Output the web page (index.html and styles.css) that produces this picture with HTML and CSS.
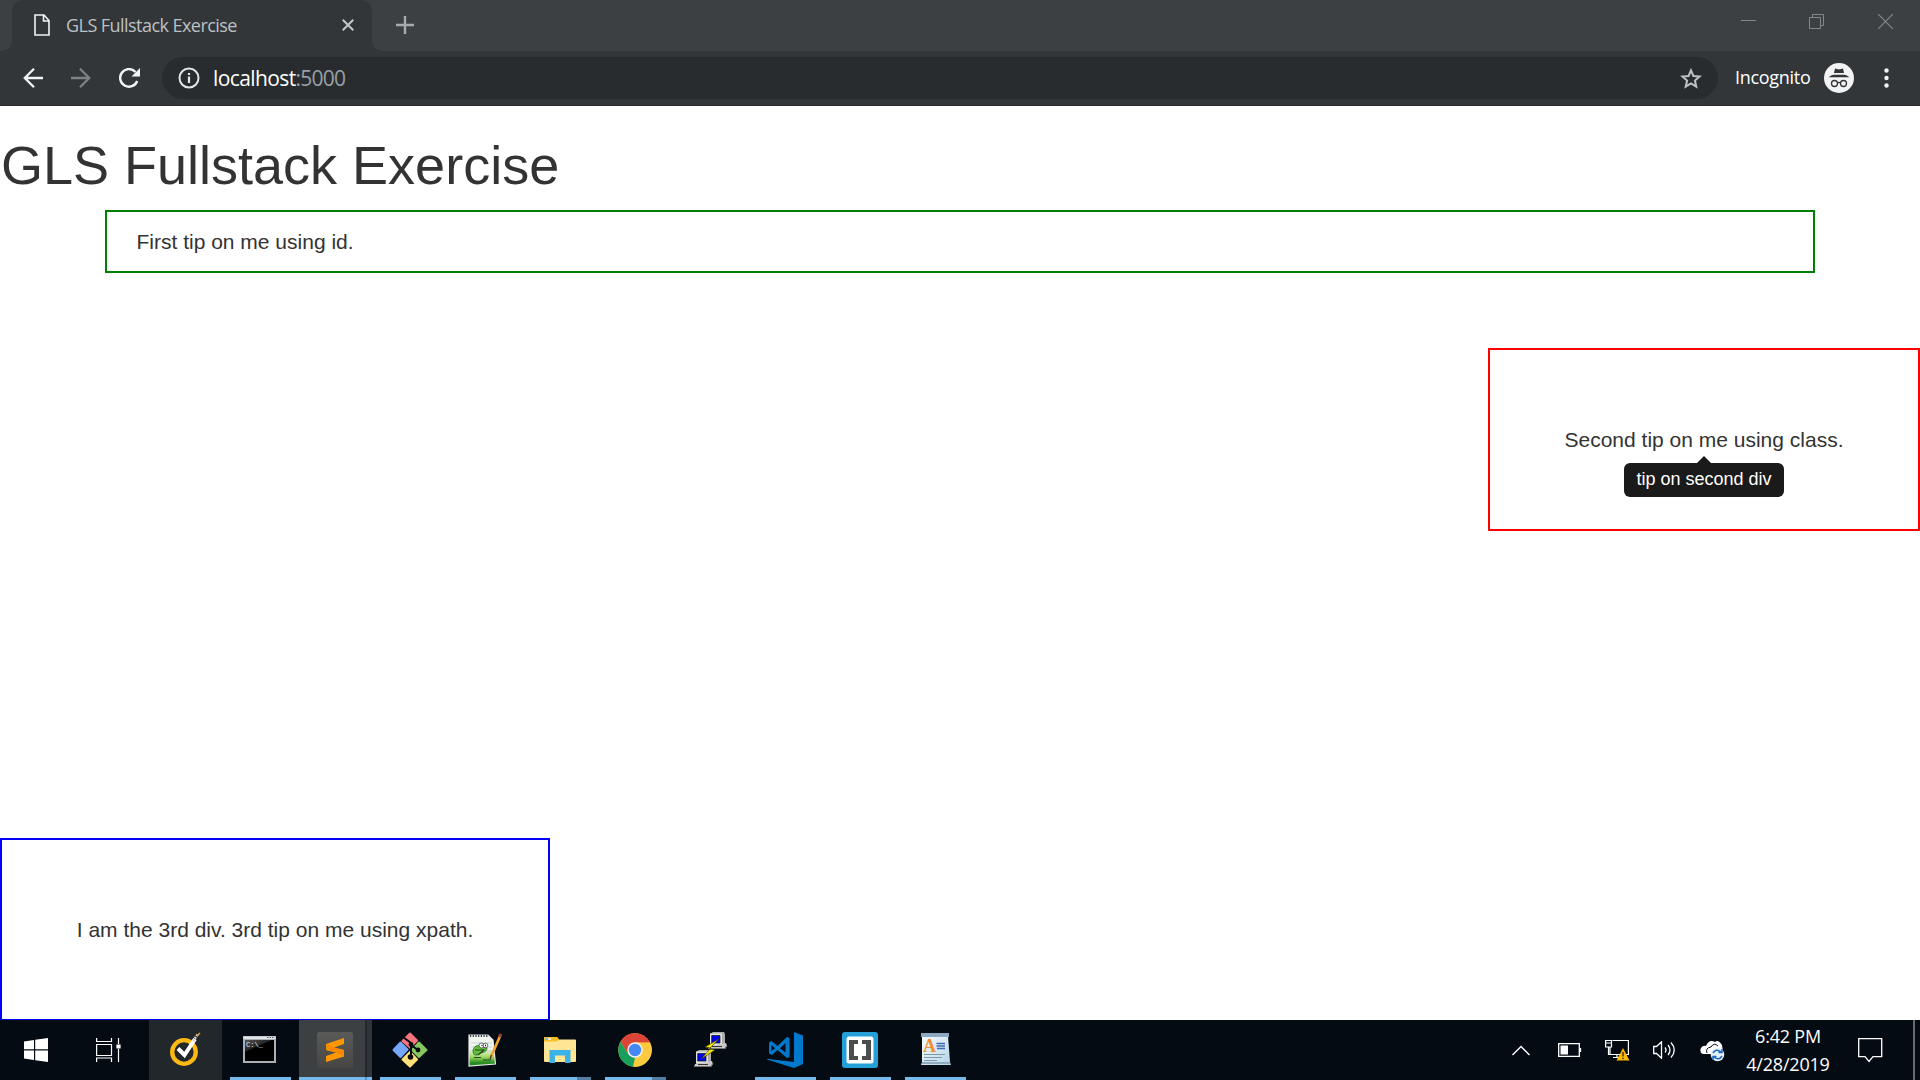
FILE: index.html
```html
<!DOCTYPE html>
<html lang="en">
<head>
<meta charset="utf-8">
<title>GLS Fullstack Exercise</title>
<link rel="stylesheet" href="styles.css">
</head>
<body>
<div class="screen">
  <header class="tabstrip">
    <svg class="tab-edge" width="12" height="51"><path d="M0 51Q12 51 12 39V51Z" fill="#323639"/></svg>
    <div class="tab">
      <svg width="16" height="22" viewBox="0 0 16 22" fill="none" stroke="#f1f3f4" stroke-width="1.6"><path d="M1 1H10L15 6.5V21H1ZM9.500 1V7H15"/></svg>
      <span class="tab-title">GLS Fullstack Exercise</span>
      <svg class="tab-close" width="12" height="12" viewBox="0 0 12 12" stroke="#c3c6c8" stroke-width="2"><path d="M.7.7 11.300 11.300M11.300.7.7 11.300"/></svg>
    </div>
    <svg class="tab-edge" width="12" height="51"><path d="M12 51Q0 51 0 39V51Z" fill="#323639"/></svg>
    <svg class="new-tab" width="18" height="18" viewBox="0 0 18 18" stroke="#a7abae" stroke-width="2.400"><path d="M9 0V18M0 9H18"/></svg>
    <div class="window-buttons">
      <svg width="15" height="15" stroke="#85888b"><path d="M0 6.500H15"/></svg>
      <svg width="15" height="15" fill="none" stroke="#85888b"><path d="M.5 3.500H11.500V14.500H.5ZM3.500 3.500V.5H14.500V11.500H11.500"/></svg>
      <svg width="15" height="15" stroke="#85888b" stroke-width="1.200"><path d="M0 0 15 15M15 0 0 15"/></svg>
    </div>
  </header>
  <nav class="toolbar">
    <svg class="nav-icon" width="20" height="20" viewBox="0 0 20 20" fill="none" stroke="#f1f3f4" stroke-width="2.300"><path d="M20 10H2M11 .8 1.800 10 11 19.200"/></svg>
    <svg class="nav-icon" width="20" height="20" viewBox="0 0 20 20" fill="none" stroke="#7f8285" stroke-width="2.300"><path d="M0 10H18M9 .8 18.200 10 9 19.200"/></svg>
    <svg class="reload" width="22" height="20" viewBox="0 0 22 20"><path d="M18.200 13A8.800 8.800 0 1 1 16.500 4" fill="none" stroke="#f1f3f4" stroke-width="2.400"/><path d="M21 0V8.500H12.500Z" fill="#f1f3f4"/></svg>
    <div class="omnibox">
      <svg width="22" height="22" viewBox="0 0 22 22"><circle cx="11" cy="11" r="9.500" fill="none" stroke="#e4e6e8" stroke-width="2"/><path d="M11 9.500V16M11 6V8" stroke="#e4e6e8" stroke-width="2.200"/></svg>
      <span class="url"><span class="host">localhost</span><span class="port">:5000</span></span>
      <svg class="star" width="22" height="21" viewBox="0 0 22 21"><path d="M11 2.300 13.400 8 19.600 8.500 14.900 12.500 16.300 18.600 11 15.400 5.700 18.600 7.100 12.500 2.400 8.500 8.600 8Z" fill="none" stroke="#bfc2c5" stroke-width="2"/></svg>
    </div>
    <span class="incognito">Incognito</span>
    <svg class="avatar" width="30" height="30" viewBox="0 0 30 30"><circle cx="15" cy="15" r="15" fill="#f1f3f4"/><g fill="#323639"><path d="M11 5.500 15 6.500 19 5.500 20 10H10ZM4.500 14.200Q8 11.800 10 11.800H20Q22 11.800 25.500 14.200Z"/></g><g fill="none" stroke="#323639" stroke-width="1.300"><circle cx="10.500" cy="20.500" r="3"/><circle cx="19.500" cy="20.500" r="3"/><path d="M13.500 20Q15 18.800 16.500 20"/></g></svg>
    <svg class="menu" width="5" height="20" fill="#f1f3f4"><circle cx="2.500" cy="2.500" r="2.200"/><circle cx="2.500" cy="10" r="2.200"/><circle cx="2.500" cy="17.500" r="2.200"/></svg>
  </nav>
  <main class="page">
    <h1>GLS Fullstack Exercise</h1>
    <div class="box first">First tip on me using id.</div>
    <div class="box second"><span class="anchor">Second tip on me using class.<span class="tooltip">tip on second div</span></span></div>
    <div class="box third">I am the 3rd div. 3rd tip on me using xpath.</div>
  </main>
  <footer class="taskbar">
    <div class="start"><svg width="24" height="24" fill="#fff"><path d="M0 3.500 10 2V11.300H0ZM11.200 1.800 24 0V11.300H11.200ZM0 12.500H10V22L0 20.600ZM11.200 12.500H24V24L11.200 22.200Z"/></svg></div>
    <div class="taskview"><svg width="25" height="24" fill="none" stroke="#fff" stroke-width="1.200"><path d="M.6 0V3.500H15.500V0M.6 6.500H15.500V17.500H.6ZM.6 24V20H15.500V24M22.500 0V6M22.500 11V24"/><path d="M21 7H24V10H21Z" fill="#fff"/></svg></div>
    <div class="app hover">
      <svg width="36" height="36" viewBox="0 0 36 36"><circle cx="17" cy="20" r="11.800" fill="none" stroke="#fdb913" stroke-width="4.300"/><path d="M11 16.500 17.500 23 28 7" fill="none" stroke="#fff" stroke-width="4"/><path d="M26 9 31 2" stroke="#d8d2c4" stroke-width="2.500" stroke-dasharray="2 1"/><path d="M30 4 33 1" stroke="#e6a22a" stroke-width="1.500"/></svg>
    </div>
    <div class="app open">
      <svg width="36" height="36" viewBox="0 0 36 36"><defs><linearGradient id="con" x2=".6" y2="1"><stop stop-color="#555"/><stop offset=".4" stop-color="#242424"/><stop offset=".42" stop-color="#000"/></linearGradient></defs><path d="M1 4H34V31H1Z" fill="#a9afb3"/><path d="M1.500 4.500H33.500V7H1.500Z" fill="#e2e5e7"/><path d="M25 5.500H32" stroke="#4a6484" stroke-dasharray="1.500 1"/><path d="M3 8H32V29H3Z" fill="url(#con)"/><text x="4" y="14.500" class="prompt">C:\_</text></svg>
    </div>
    <div class="app active open">
      <svg width="36" height="36" viewBox="0 0 36 36"><defs><linearGradient id="sub" x2="0" y2="1"><stop stop-color="#5a5a59"/><stop offset="1" stop-color="#484644"/></linearGradient></defs><rect width="36" height="36" rx="2.500" fill="url(#sub)"/><path d="M9 12 27 6V12L17 15.500 27 18V24.500L9 30V24L19 20.600 9 18Z" fill="#ff9800"/><path d="M9 12 17 15.500 27 18V24.500L19 20.600 9 18Z" fill="#f58a00"/></svg>
    </div>
    <div class="app open">
      <svg width="36" height="36" viewBox="0 0 36 36"><g stroke-linejoin="round" stroke-width="2"><path d="M18 1.500 25 8.500 18 15.500 10.500 9Z" fill="#f87580" stroke="#f87580"/><path d="M8.500 10.500 15.500 17.500 8.500 25 1.500 18Z" fill="#76a7fa" stroke="#76a7fa"/><path d="M27 10.500 34.500 18 27 25 20 18Z" fill="#85c760" stroke="#85c760"/><path d="M18 20 25 27.500 18 34.500 10.500 27.500Z" fill="#ffe078" stroke="#ffe078"/></g><path d="M11 5 19 11V25M19 13 26 18" fill="none" stroke="#050b12" stroke-width="2"/><g fill="#050b12"><circle cx="19" cy="12.500" r="2.400"/><circle cx="26" cy="18" r="2.400"/><circle cx="18.500" cy="25" r="2.800"/></g></svg>
    </div>
    <div class="app open">
      <svg width="36" height="36" viewBox="0 0 36 36"><defs><linearGradient id="npp" x2="0" y2="1"><stop offset=".45" stop-color="#f1f5ef"/><stop offset=".7" stop-color="#a5da62"/><stop offset=".9" stop-color="#258c1f"/></linearGradient></defs><path d="M2 3H21L26 8 28.500 32 2 34Z" fill="url(#npp)" stroke="#e6e8e7" stroke-width="1.200"/><path d="M3 4H22" stroke="#343c3a" stroke-width="2" stroke-dasharray="1.200 1.500"/><path d="M4 11H25M4 15H25M4 19H25" stroke="#b6cbd1" stroke-width=".7"/><path d="M6 18Q8 12 14 14L20 16Q20 20 14 21L10 23Q6 24 6 18Z" fill="#62be3a" stroke="#2e6824" stroke-width=".8"/><path d="M8 18H17L11 23M7 25.500H14M16 28H24" fill="none" stroke="#244820" stroke-width="1.100"/><circle cx="14.500" cy="13.500" r="2.500" fill="#fff" stroke="#333" stroke-width=".7"/><circle cx="18.500" cy="13.500" r="2.300" fill="#fff" stroke="#333" stroke-width=".7"/><path d="M14.500 13.500H15.500M18 13.500H19" stroke="#111" stroke-width="1.300"/><path d="M24 25 33.500 3" stroke="#f2a429" stroke-width="2.600"/><path d="M32.300 5 34 1.800" stroke="#91413a" stroke-width="2.800"/><path d="M23 27 24.500 23" stroke="#443326" stroke-width="1.300"/></svg>
    </div>
    <div class="app open stacked">
      <svg width="36" height="36" viewBox="0 0 36 36"><path d="M2 6Q2 5 3 5H15L17 7.500H33Q34 7.500 34 8.500V29Q34 30 33 30H3Q2 30 2 29Z" fill="#ffe594"/><path d="M2 6Q2 5 3 5H15L17 7.500 15 9.500H2Z" fill="#f8bd23"/><path d="M4 7H9" stroke="#fff" stroke-width="1.500"/><path d="M4 7H6" stroke="#35aee5" stroke-width="1.500"/><path d="M7.500 18H28.500V31H23V23.500H13V31H7.500Z" fill="#3bb3e8"/></svg>
    </div>
    <div class="app open stacked">
      <svg width="36" height="36" viewBox="0 0 36 36"><circle cx="18" cy="18" r="16.700" fill="#fcca3e"/><path d="M3.500 9.700A16.700 16.700 0 0 1 33 10.700H18L11 22Z" fill="#db4437"/><path d="M3.500 9.700 11 22 18 26 16 34.600A16.700 16.700 0 0 1 3.500 9.700Z" fill="#17a05d"/><path d="M18 10.500H33A16.700 16.700 0 0 1 16.300 34.600L25 22Z" fill="#fcca3e"/><circle cx="18" cy="18" r="7.700" fill="#f1f1f1"/><circle cx="18" cy="18" r="6.200" fill="#4688f1"/></svg>
    </div>
    <div class="app">
      <svg width="36" height="36" viewBox="0 0 36 36"><g id="pc"><path d="M18 2 21 0H32L33 2V12L31 14H18Z" fill="#aaa"/><path d="M18 1.500H30V13.500H18Z" fill="#e2e2dc"/><path d="M19.700 3.500H28V11H19.700Z" fill="#00e" stroke="#111" stroke-width=".7"/><path d="M17 14 34 11 35 14 33 17H16Z" fill="#c9c9c7"/><path d="M16 16.500H33L35 13" fill="none" stroke="#777"/><path d="M20 14.500H30" stroke="#333"/></g><use href="#pc" x="-14" y="18"/><path d="M27 7 13 15 19 16 9 27 23 18 17 17Z" fill="#f4f000" stroke="#3e3b00" stroke-width=".7"/></svg>
    </div>
    <div class="app open">
      <svg width="36" height="36" viewBox="0 0 36 36"><path d="M27 0 36 3.500V32L27 36 0 27.500V26.700L27 30Z" fill="#0079cc"/><path fill-rule="evenodd" d="M20 5 22.500 6V25L20 26 10.500 18 5 23 2 21.500V10.500L4.500 9 10.500 14ZM18.500 11 13 16.200 18.500 20.500ZM4.500 13V19L8 16.200Z" fill="#0079cc"/></svg>
    </div>
    <div class="app open">
      <svg width="36" height="36" viewBox="0 0 36 36"><rect width="36" height="36" rx="3" fill="#249fd8"/><rect x="4.500" y="4.500" width="27" height="27" rx="2.500" fill="#fff"/><path d="M7 8H16V12H12V24H16V28H7ZM20 8H29V28H20V24H24V12H20Z" fill="#4d4d4d"/></svg>
    </div>
    <div class="app open">
      <svg width="36" height="36" viewBox="0 0 36 36"><defs><linearGradient id="wp" x2="1" y2="1"><stop stop-color="#f8fcff"/><stop offset="1" stop-color="#b3d4e6"/></linearGradient></defs><path d="M5 4H31L33 30 34 33H4L5 30Z" fill="url(#wp)"/><path d="M4 1H32V5H4Z" fill="#8ca9c1"/><path d="M5 31H33" stroke="#8facbf" stroke-width="2"/><text x="6" y="20" class="letter">A</text><path d="M19.500 11.500H28M19.500 14H28M20 16.500H28" stroke="#4269b5" stroke-width="1.300"/><path d="M7 22.500H28M7 25.500H25M7 28.500H20" stroke="#8099a5"/></svg>
    </div>
    <div class="tray">
      <svg width="18" height="11" fill="none" stroke="#fff" stroke-width="1.400"><path d="M.5 10 9 1.500 17.500 10"/></svg>
      <svg width="24" height="14" fill="none" stroke="#fff" stroke-width="1.300"><path d="M.7.7H21.300V13.300H.7ZM22.500 5V9"/><path d="M2.500 2.500H10V11.500H2.500Z" fill="#fff" stroke="none"/></svg>
      <svg width="25" height="22" fill="none" stroke="#fff" stroke-width="1.200"><path d="M7.500 1.500H23.400V15.500H5V8M.6 1.500H6.500V8H.6ZM.6 4H6.500M3.500 8V15.500H13M12 16V18.500M8 18.500H14"/><path d="M18 9 24.500 21.500H11.500Z" fill="#fdb900" stroke="none"/><path d="M18 13V17.500M18 18.800V20.300" stroke="#222" stroke-width="1.300"/></svg>
      <svg width="23" height="18" fill="none" stroke="#fff" stroke-width="1.300"><path d="M.7 5.500H3.500L8.500.8V17.200L3.500 12.500H.7ZM12 6.500Q14 9 12 11.500M15 4Q19 9 15 14M18 1.500Q24.500 9 18 16.500"/></svg>
      <svg class="cloud" width="25" height="22"><path d="M3 14Q-1 12 1 8 3 5 6 6 9-1 15 2 18-1 22 5L23 12 11 14Z" fill="#fff"/><path d="M7 13Q5 8 11 7 14 2 18 6" stroke="#07101a" fill="none"/><circle cx="17.500" cy="14.500" r="6.800" fill="#e7f1fa"/><path d="M13 13Q16 8 21 12M22 9V12.500H18.500M22 16Q19 21 14 17M13 20V16.500H16.500" fill="none" stroke="#1769c5" stroke-width="1.500"/></svg>
      <div class="clock"><span class="time">6:42 PM</span><span class="date">4/28/2019</span></div>
      <svg class="notice" width="25" height="25" fill="none" stroke="#fff" stroke-width="1.300"><path d="M.7.7H23.700V18.700H15L11 23.500 7 18.700H.7Z"/></svg>
    </div>
    <div class="show-desktop"></div>
  </footer>
</div>
</body>
</html>
```
FILE: styles.css
```css
* { box-sizing: border-box; }
body { margin: 0; overflow: hidden; background: #fff; }
svg { display: block; flex: none; }
.screen { width: 1920px; height: 1080px; display: flex; flex-direction: column; overflow: hidden; }
.tabstrip, .toolbar, .taskbar { font-family: "Open Sans", "Noto Sans", sans-serif; flex: none; display: flex; }

.tabstrip { height: 51px; background: #3c4043; }
.tab { width: 360px; height: 51px; padding: 0 18px 2px 22px; display: flex; align-items: center; background: #323639; border-radius: 12px 12px 0 0; }
.tab-title { margin-left: 16px; font-size: 18px; color: #bdc1c4; letter-spacing: -0.550px; white-space: nowrap; }
.tab-close { margin-left: auto; }
.new-tab { margin: 16px 0 0 12px; }
.window-buttons { margin: 14px 27px 0 auto; display: flex; gap: 54px; }
.window-buttons svg:first-child { margin-right: -1px; }

.toolbar { height: 55px; padding: 0 31px 0 23px; align-items: center; background: #323639; border-bottom: 1px solid #27292c; }
.nav-icon { margin-right: 28px; }
.reload { margin-right: 21px; }
.omnibox { width: 1556px; height: 42px; padding: 0 16px; display: flex; align-items: center; background: #282c2f; border-radius: 21px; }
.url { margin-left: 13px; font-size: 21px; white-space: nowrap; }
.host { color: #fff; letter-spacing: -0.600px; }
.port { color: #9aa0a6; letter-spacing: -0.800px; }
.star { margin-left: auto; }
.incognito { width: 76px; margin-left: 17px; padding-bottom: 2px; font-size: 18px; letter-spacing: -0.300px; color: #fff; white-space: nowrap; }
.avatar { margin-left: 13px; }
.menu { margin-left: auto; }

.page { flex: 1; min-height: 0; display: flex; flex-direction: column; overflow: hidden; background: #fff; color: #333; font: 21px/30px "Liberation Sans", Arial, sans-serif; }
h1 { margin: 30px 0 16px; padding-left: 1px; font-size: 54px; font-weight: 400; line-height: 58px; }
.box { flex: none; border: 2px solid; color: #333; white-space: nowrap; }
.first { height: 63px; margin: 0 105px; padding: 15px 29.500px; border-color: #008000; }
.second { align-self: flex-end; width: 432px; height: 183px; margin-top: 75px; padding: 75px 0; text-align: center; border-color: #f00; }
.third { width: 550px; height: 183px; margin-top: 307px; padding: 75px 0; text-align: center; border-color: #00f; }
.anchor { position: relative; display: inline-block; }
.tooltip { position: absolute; top: 38px; left: 50%; width: 160px; height: 34px; transform: translateX(-50%); border-radius: 6px; background: #1a1a1a; color: #fff; font-size: 18px; line-height: 32px; }
.tooltip::before { content: ""; position: absolute; left: 73px; top: -7.500px; border: 7.500px solid transparent; border-top: 0; border-bottom-color: #1a1a1a; }

.taskbar { height: 60px; background: #050b13; color: #fff; }
.start, .taskview { display: flex; align-items: center; justify-content: center; }
.start { width: 72px; }
.taskview { width: 77px; padding-right: 4px; }
.app { flex: none; width: 73px; height: 60px; margin-right: 2px; padding-top: 12px; display: flex; flex-direction: column; align-items: center; }
.app > svg { margin-right: 2px; }
.app.hover { background: #22272c; }
.app.active { background: linear-gradient(90deg, #3d4043 66px, #24282c 66px 68px, #303438 68px); }
.app.open::after { content: ""; width: 61px; height: 3px; margin-top: auto; background: #76b9ed; }
.app.active::after { width: 73px; background: linear-gradient(90deg, #76b9ed 66px, #578db8 66px 68px, #76b9ed 68px); }
.app.stacked::after { background: linear-gradient(90deg, #76b9ed 47px, #527fa3 47px); }
.prompt { font: 7px "Liberation Mono", monospace; fill: #eee; }
.letter { font: bold 18px "Liberation Serif", serif; fill: #f28c32; }
.tray { margin-left: auto; display: flex; align-items: center; }
.tray > svg { margin-right: 23px; }
.tray > svg:first-child { margin-right: 28px; }
.tray > .cloud { margin: 2px 19px 0 1px; }
.clock { width: 88px; display: flex; flex-direction: column; align-items: center; font-size: 18px; line-height: 28px; letter-spacing: -0.200px; white-space: nowrap; }
.tray > .notice { margin: 0 30px 0 26px; }
.show-desktop { width: 7px; border-left: 2px solid #646a70; }
```
